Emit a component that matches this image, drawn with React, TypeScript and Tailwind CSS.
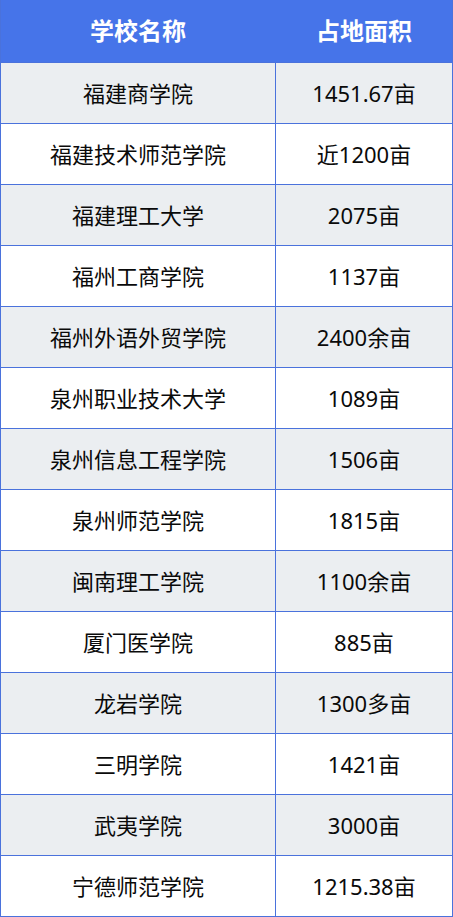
import React from "react";

const rows: [string, string][] = [
  ["福建商学院", "1451.67亩"],
  ["福建技术师范学院", "近1200亩"],
  ["福建理工大学", "2075亩"],
  ["福州工商学院", "1137亩"],
  ["福州外语外贸学院", "2400余亩"],
  ["泉州职业技术大学", "1089亩"],
  ["泉州信息工程学院", "1506亩"],
  ["泉州师范学院", "1815亩"],
  ["闽南理工学院", "1100余亩"],
  ["厦门医学院", "885亩"],
  ["龙岩学院", "1300多亩"],
  ["三明学院", "1421亩"],
  ["武夷学院", "3000亩"],
  ["宁德师范学院", "1215.38亩"],
];

export default function App() {
  return (
    <div
      className="w-[453px] h-[917px] bg-white text-[#0a0a0a]"
      style={{ fontFamily: '"Noto Sans", "Noto Sans CJK SC", sans-serif' }}
    >
      <div className="w-[453px] border-l border-r border-b border-[#4a72dc]">
        <div className="flex h-[62px] bg-[#4674e9] text-white font-bold text-[24px]">
          <div className="w-[274px] flex items-center justify-center">学校名称</div>
          <div className="w-px" />
          <div className="flex-1 flex items-center justify-center">占地面积</div>
        </div>
        {rows.map(([name, area], i) => (
          <div
            key={name}
            className={`flex h-[61px] border-t border-[#4a72dc] text-[22px] ${
              i % 2 === 0 ? "bg-[#ebeef1]" : "bg-white"
            }`}
          >
            <div className="w-[274px] flex items-center justify-center">{name}</div>
            <div className="w-px bg-[#4a72dc]" />
            <div className="flex-1 flex items-center justify-center">{area}</div>
          </div>
        ))}
      </div>
    </div>
  );
}
